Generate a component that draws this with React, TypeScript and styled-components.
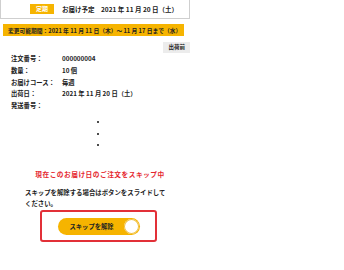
import React from "react";
import styled, { createGlobalStyle } from "styled-components";

const Global = createGlobalStyle`
  html, body { margin: 0; padding: 0; background: #fff; }
  body { font-family: "Noto Sans CJK JP", "Noto Sans", sans-serif; color: #222; }
`;

const Page = styled.div`
  width: 190px;
  display: flex;
  flex-direction: column;
`;

const Header = styled.div`
  height: 19px;
  border: 1px solid #cfcfcf;
  border-top: none;
  display: flex;
  align-items: center;
  padding-left: 29px;
  gap: 8px;
  box-sizing: border-box;
`;

const Tag = styled.span`
  background: #f6b400;
  color: #fff;
  font-size: 6px;
  font-weight: 700;
  padding: 1px 6px;
  line-height: 8px;
`;

const HeaderText = styled.span`
  font-size: 6.5px;
  font-weight: 700;
  white-space: pre;
`;

const Notice = styled.div`
  margin: 5px 0 0 3px;
  width: 181px;
  height: 12px;
  background: #f6b400;
  font-size: 5.75px;
  font-weight: 700;
  display: flex;
  align-items: center;
  padding-left: 5px;
  box-sizing: border-box;
  white-space: pre;
`;

const BadgeRow = styled.div`
  display: flex;
  justify-content: flex-end;
  margin-top: 6px;
`;

const Badge = styled.span`
  background: #ececec;
  font-size: 5.5px;
  font-weight: 700;
  padding: 1px 5px;
  line-height: 9px;
`;

const Info = styled.dl`
  margin: 0 0 0 11px;
  display: grid;
  grid-template-columns: 51px 1fr;
  grid-auto-rows: 11.7px;
  align-items: center;
  font-size: 6.3px;
  font-weight: 700;
`;

const Term = styled.dt`
  margin: 0;
`;

const Def = styled.dd`
  margin: 0;
  white-space: pre;
`;

const Dots = styled.div`
  display: flex;
  flex-direction: column;
  align-items: center;
  gap: 9.5px;
  margin-top: 10px;
  padding-left: 5px;
`;

const Dot = styled.span`
  width: 2px;
  height: 2px;
  border-radius: 50%;
  background: #111;
`;

const Skip = styled.div`
  margin-top: 23px;
  text-align: center;
  color: #e5262e;
  font-size: 6.7px;
  font-weight: 700;
  letter-spacing: 0.5px;
  padding-left: 10px;
`;

const Help = styled.p`
  margin: 8px 0 0 25px;
  width: 144px;
  font-size: 6.4px;
  font-weight: 700;
  line-height: 11px;
`;

const Frame = styled.div`
  margin: 1px 0 0 40px;
  width: 117px;
  height: 32px;
  border: 2px solid #e23038;
  border-radius: 3px;
  box-sizing: border-box;
  display: flex;
  align-items: center;
  justify-content: center;
`;

const Slider = styled.div`
  width: 82px;
  height: 17px;
  background: #f6b400;
  border-radius: 9px;
  display: flex;
  align-items: center;
  justify-content: space-between;
  padding: 0 1px 0 12px;
  box-sizing: border-box;
`;

const SliderLabel = styled.span`
  font-size: 6.3px;
  font-weight: 700;
`;

const Knob = styled.span`
  width: 15px;
  height: 15px;
  border-radius: 50%;
  background: #fff;
  box-shadow: inset 0 0 0 1px #f0c040;
`;

const rows: [string, string][] = [
  ["注文番号：", "000000004"],
  ["数量：", "10 個"],
  ["お届けコース：", "毎週"],
  ["出荷日：", "2021 年 11 月 20 日（土）"],
  ["発送番号：", ""],
];

export default function App() {
  return (
    <Page>
      <Global />
      <Header>
        <Tag>定期</Tag>
        <HeaderText>お届け予定　2021 年 11 月 20 日（土）</HeaderText>
      </Header>
      <Notice>変更可能期間：2021 年 11 月 11 日（木）～ 11 月 17 日まで（水）</Notice>
      <BadgeRow>
        <Badge>出荷前</Badge>
      </BadgeRow>
      <Info>
        {rows.map(([k, v]) => (
          <React.Fragment key={k}>
            <Term>{k}</Term>
            <Def>{v}</Def>
          </React.Fragment>
        ))}
      </Info>
      <Dots>
        <Dot />
        <Dot />
        <Dot />
      </Dots>
      <Skip>現在このお届け日のご注文をスキップ中</Skip>
      <Help>スキップを解除する場合はボタンをスライドしてください。</Help>
      <Frame>
        <Slider>
          <SliderLabel>スキップを解除</SliderLabel>
          <Knob />
        </Slider>
      </Frame>
    </Page>
  );
}
